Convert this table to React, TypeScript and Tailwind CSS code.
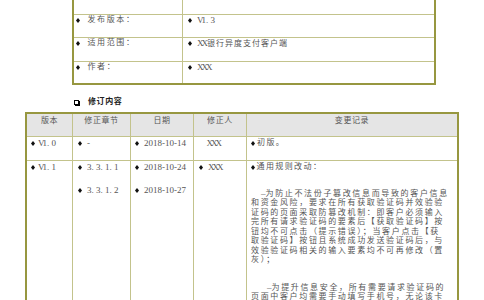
import React from "react";

const F = "font-['Liberation_Serif','Noto_Sans_CJK_SC',serif]";

function B({ className = "" }: { className?: string }) {
  return (
    <svg width="4" height="5" viewBox="0 0 4 5" className={"shrink-0 " + className}>
      <path d="M2 0L4 2.5L2 5L0 2.5Z" fill="#111" />
    </svg>
  );
}

function X3() {
  return <span className="tracking-[-2px]">XXX</span>;
}

export default function App() {
  const inner = "border-[#c3c38c]";
  return (
    <div className={"w-[484px] h-[300px] overflow-hidden bg-white text-[9px] text-[#555] " + F}>
      {/* top info table */}
      <div className="ml-[72px] w-[364px] border-x-2 border-b-2 border-[#979740]">
        <div className={"flex h-[15px] border-b " + inner}>
          <div className={"w-[109px] border-r " + inner} />
          <div className="flex-1" />
        </div>
        {[
          { k: "发布版本：", v: <span><span className="tracking-[-2px]">V</span>1. 3</span>, h: "h-[23px] border-b" },
          {
            k: "适用范围：",
            v: (
              <span>
                <span className="tracking-[-2px]">XX</span>
                <span className="ml-[1px] text-[8px] tracking-[1px]">银行异度支付客户端</span>
              </span>
            ),
            h: "h-[24px] border-b",
          },
          { k: "作者：", v: <X3 />, h: "h-[21px]" },
        ].map((r, i) => (
          <div key={i} className={"flex " + r.h + " " + inner}>
            <div className={"w-[109px] border-r pl-[2px] " + inner}>
              <div className="flex items-center h-[10px] leading-[10px]">
                <B className="mr-[7.5px]" />
                <span className="text-[8px] tracking-[1.6px]">{r.k}</span>
              </div>
            </div>
            <div className="flex-1 pl-[5px]">
              <div className="flex items-center h-[10px] leading-[10px]">
                <B className="mr-[5px]" />
                {r.v}
              </div>
            </div>
          </div>
        ))}
      </div>

      {/* heading */}
      <div className="mt-[12px] ml-[74px] flex items-center h-[10px] leading-[10px]">
        <div className="w-[5px] h-[5px] border border-black shadow-[1px_1px_0_0_#000]" />
        <span className="ml-[9px] font-bold text-[#222] text-[8px] tracking-[0.6px]">修订内容</span>
      </div>

      {/* revision table */}
      <div className="mt-[5px] ml-[25px] w-[434px] border-2 border-b-0 border-[#979740]">
        <div className={"grid grid-cols-[46px_58px_63px_53px_210px] h-[23px] bg-[#e5e5e5] border-b " + inner}>
          {["版本", "修正章节", "日期", "修正人", "变更记录"].map((t, i) => (
            <div
              key={t}
              className={"text-center pt-[1px] leading-[10px] " + (i < 4 ? "border-r " + inner : "")}
            >
              <span className="text-[8px] tracking-[0.6px]">{t}</span>
            </div>
          ))}
        </div>

        <div className={"grid grid-cols-[46px_58px_63px_53px_210px] h-[24px] border-b " + inner}>
          <div className={"border-r pl-[4px] pt-[1px] " + inner}>
            <div className="flex items-center h-[10px] leading-[10px]">
              <B className="mr-[3px]" />
              <span><span className="tracking-[-2px]">V</span>1. 0</span>
            </div>
          </div>
          <div className={"border-r pl-[4.5px] pt-[1px] " + inner}>
            <div className="flex items-center h-[10px] leading-[10px]">
              <B className="mr-[5.5px]" />
              <span>-</span>
            </div>
          </div>
          <div className={"border-r pl-[4px] pt-[1px] " + inner}>
            <div className="flex items-center h-[10px] leading-[10px]">
              <B className="mr-[5px]" />
              <span>2018-10-14</span>
            </div>
          </div>
          <div className={"border-r pl-[12.5px] pt-[1px] " + inner}>
            <div className="flex items-center h-[10px] leading-[10px]">
              <X3 />
            </div>
          </div>
          <div className="pl-[3.5px] pt-[1px]">
            <div className="flex items-center h-[10px] leading-[10px]">
              <B className="mr-[2.5px]" />
              <span className="text-[8px] tracking-[1.4px]">初版。</span>
            </div>
          </div>
        </div>

        <div className="grid grid-cols-[46px_58px_63px_53px_210px] h-[200px]">
          <div className={"border-r pl-[4px] pt-[1px] " + inner}>
            <div className="flex items-center h-[10px] leading-[10px]">
              <B className="mr-[3px]" />
              <span><span className="tracking-[-2px]">V</span>1. 1</span>
            </div>
          </div>
          <div className={"border-r pl-[4.5px] pt-[1px] " + inner}>
            <div className="flex items-center h-[10px] leading-[10px]">
              <B className="mr-[5.5px]" />
              <span>3. 3. 1. 1</span>
            </div>
            <div className="mt-[13px] flex items-center h-[10px] leading-[10px]">
              <B className="mr-[5.5px]" />
              <span>3. 3. 1. 2</span>
            </div>
          </div>
          <div className={"border-r pl-[4px] pt-[1px] " + inner}>
            <div className="flex items-center h-[10px] leading-[10px]">
              <B className="mr-[5px]" />
              <span>2018-10-24</span>
            </div>
            <div className="mt-[13px] flex items-center h-[10px] leading-[10px]">
              <B className="mr-[5px]" />
              <span>2018-10-27</span>
            </div>
          </div>
          <div className={"border-r pl-[4.5px] pt-[1px] " + inner}>
            <div className="flex items-center h-[10px] leading-[10px]">
              <B className="mr-[5.5px]" />
              <X3 />
            </div>
          </div>
          <div className="pl-[4px] pt-[1px]">
            <div className="flex items-center h-[10px] leading-[10px]">
              <B className="mr-[1.5px]" />
              <span className="text-[8px] tracking-[1.4px]">通用规则改动：</span>
            </div>
            <div className="mt-[16.5px] text-[8px] leading-[9.5px] tracking-[1.65px] whitespace-nowrap">
              <div className="pl-[10px]"><span className="text-[9px] tracking-[0px]">–</span>为防止不法份子篡改信息而导致的客户信息</div>
              <div>和资金风险，要求在所有获取验证码并效验验</div>
              <div>证码的页面采取防篡改机制：即客户必须输入</div>
              <div>完所有请求验证码的要素后【获取验证码】按</div>
              <div>钮均不可点击（提示错误）；当客户点击【获</div>
              <div>取验证码】按钮且系统成功发送验证码后，与</div>
              <div>效验验证码相关的输入要素均不可再修改（置</div>
              <div>灰）；</div>
            </div>
            <div className="mt-[18px] text-[8px] leading-[9.5px] tracking-[1.65px] whitespace-nowrap">
              <div className="pl-[16px]"><span className="text-[9px] tracking-[0px]">–</span>为提升信息安全，所有需要请求验证码的</div>
              <div>页面中客户均需要手动填写手机号，无论该卡</div>
            </div>
          </div>
        </div>
      </div>
    </div>
  );
}
